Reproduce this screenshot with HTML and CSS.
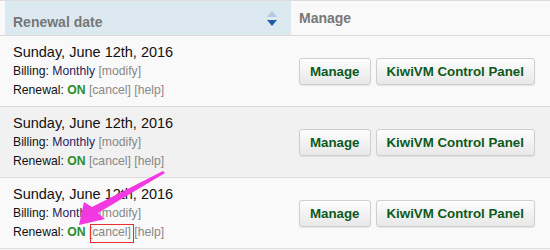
FILE: index.html
```html
<!DOCTYPE html>
<html lang="en">
<head>
  <meta charset="UTF-8">
  <title>Services</title>
  <link rel="stylesheet" href="styles.css">
</head>
<body>
  <div class="services">
    <div class="row head">
      <div class="cell date-col sortable">
        Renewal date
        <svg class="sort" width="10" height="16" viewBox="0 0 10 16">
          <polygon points="5,0 10,6 0,6" fill="#b3cbe0"/>
          <polygon points="0,9 10,9 5,15" fill="#1f5fa8"/>
        </svg>
      </div>
      <div class="cell manage-col">Manage</div>
    </div>

    <div class="row odd">
      <div class="cell date-col">
        <div class="date">Sunday, June 12th, 2016</div>
        <div class="line">Billing: <span class="cycle">Monthly</span> <span class="link">[modify]</span></div>
        <div class="line">Renewal: <b class="on">ON</b> <span class="link">[cancel]</span> <span class="link">[help]</span></div>
      </div>
      <div class="cell manage-col buttons">
        <button>Manage</button>
        <button>KiwiVM Control Panel</button>
      </div>
    </div>

    <div class="row even">
      <div class="cell date-col">
        <div class="date">Sunday, June 12th, 2016</div>
        <div class="line">Billing: <span class="cycle">Monthly</span> <span class="link">[modify]</span></div>
        <div class="line">Renewal: <b class="on">ON</b> <span class="link">[cancel]</span> <span class="link">[help]</span></div>
      </div>
      <div class="cell manage-col buttons">
        <button>Manage</button>
        <button>KiwiVM Control Panel</button>
      </div>
    </div>

    <div class="row odd">
      <div class="cell date-col">
        <div class="date">Sunday, June 12th, 2016</div>
        <div class="line">Billing: <span class="cycle">Monthly</span> <span class="link">[modify]</span></div>
        <div class="line">Renewal: <b class="on">ON</b> <span class="link">[cancel]</span> <span class="link">[help]</span></div>
      </div>
      <div class="cell manage-col buttons">
        <button>Manage</button>
        <button>KiwiVM Control Panel</button>
      </div>
    </div>
  </div>

  <!-- screenshot annotation -->
  <svg class="annotation" width="550" height="250" viewBox="0 0 550 250">
    <rect x="90.5" y="224.5" width="43" height="18" fill="none" stroke="#e8312f" stroke-width="1"/>
    <polygon points="79,225 84,202 92,207 163,171 165,173 98,213 105,219" fill="#f238e0"/>
  </svg>
</body>
</html>
```

FILE: styles.css
```css
body {
  margin: 0;
  font-family: "Liberation Sans", Arial, sans-serif;
  background: #f9f9f9;
  color: #222;
}

.services {
  width: 560px;
  border-top: 1px solid #dcdcdc;
}

.row {
  display: flex;
  border-bottom: 1px solid #dcdcdc;
}

.cell {
  box-sizing: border-box;
}

.date-col {
  width: 291px;
  padding-left: 13px;
}

.manage-col {
  flex: 1;
  padding-left: 8px;
}

.head {
  height: 34px;
  background: #f9f9f9;
}

.head .cell {
  display: flex;
  align-items: center;
  font-size: 14px;
  font-weight: bold;
  color: #777;
}

.sortable {
  margin-left: 5px;
  padding-left: 8px;
  width: 286px;
  background: #dde9f1;
  position: relative;
}

.sort {
  position: absolute;
  right: 14px;
  top: 10px;
}

.odd {
  background: #f9f9f9;
}

.even {
  background: #f1f1f1;
}

.row.odd, .row.even {
  height: 70px;
}

.row .date-col {
  padding-top: 7px;
}

.date {
  font-size: 14.5px;
  line-height: 19px;
  color: #111;
}

.line {
  font-size: 12.2px;
  line-height: 19px;
  color: #111;
}

.cycle {
  color: #2c1b5e;
}

.link {
  color: #888;
}

.on {
  color: #2a8d2a;
}

.buttons {
  display: flex;
  align-items: center;
  gap: 5px;
}

button {
  font-family: "Liberation Sans", Arial, sans-serif;
  font-size: 13.3px;
  font-weight: bold;
  color: #0d5a1c;
  height: 27px;
  padding: 0 10px;
  border: 1px solid #cfcfcf;
  border-radius: 3px;
  background: linear-gradient(#fdfdfd, #e8e8e8);
  box-shadow: 0 1px 1px rgba(0, 0, 0, 0.08);
  cursor: pointer;
}

.annotation {
  position: absolute;
  left: 0;
  top: 0;
  pointer-events: none;
}
```
